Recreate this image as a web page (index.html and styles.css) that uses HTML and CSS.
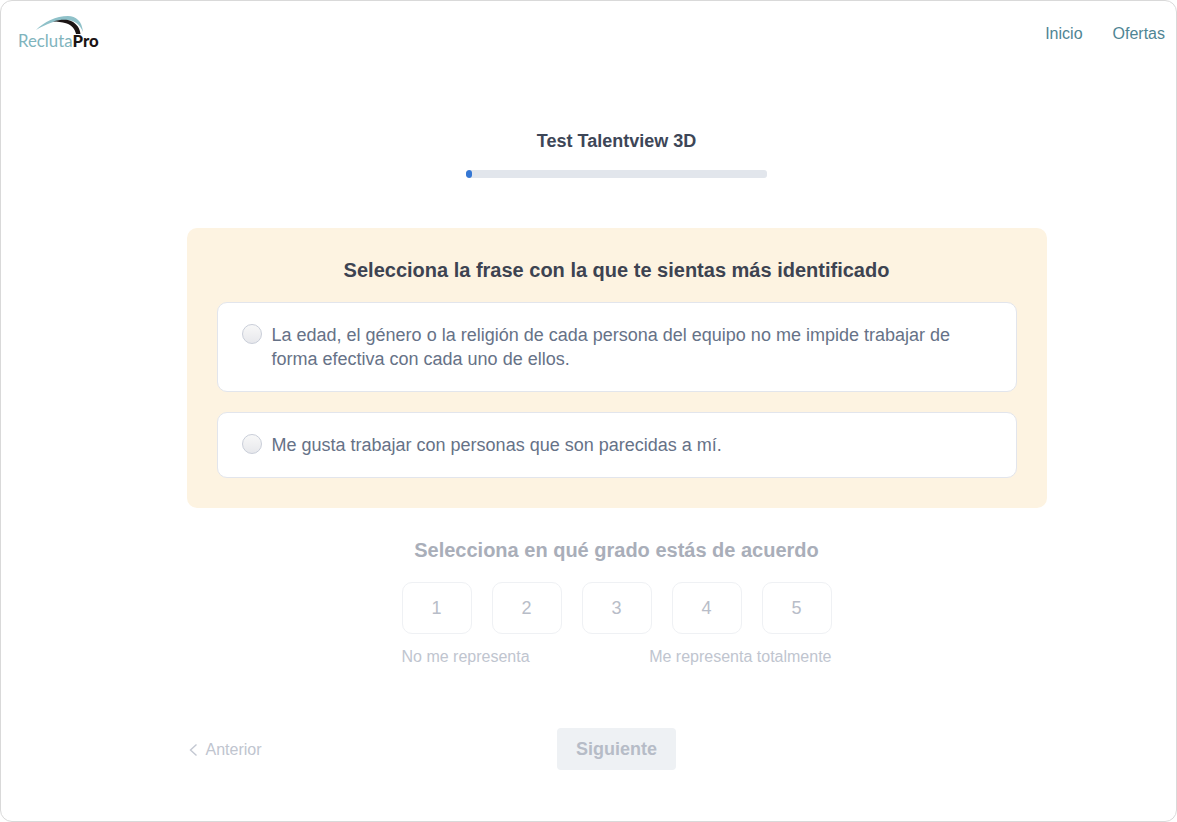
FILE: index.html
```html
<!DOCTYPE html>
<html lang="es">
<head>
<meta charset="utf-8">
<title>Test Talentview 3D</title>
<link rel="stylesheet" href="styles.css">
</head>
<body>
<div class="frame">
  <header class="topbar">
    <a class="logo" href="#">
      <svg class="logo-arc" width="48" height="22" viewBox="0 0 48 22">
        <path d="M0 15C8 7 20 1 32 1C40 1 46 6 47 17C44 9 38 5 30 5C20 5 10 9 0 15Z" fill="#8fc1c9"/>
        <path d="M17 6.500C24 4.500 31 4.200 35 6C41 8.500 44 14 44.500 19L40 19C39 14 36 10 30 8.200C26 7 21 6.500 17 6.500Z" fill="#1b1414"/>
      </svg>
      <span class="logo-text"><span class="logo-light">Recluta</span><span class="logo-bold">Pro</span></span>
    </a>
    <nav class="nav">
      <a href="#">Inicio</a>
      <a href="#">Ofertas</a>
    </nav>
  </header>
  <main class="main">
    <h1 class="title">Test Talentview 3D</h1>
    <div class="progress"><div class="progress-fill"></div></div>
    <section class="card">
      <h2 class="card-title">Selecciona la frase con la que te sientas más identificado</h2>
      <label class="option">
        <span class="radio"></span>
        <span class="option-text">La edad, el género o la religión de cada persona del equipo no me impide trabajar de forma efectiva con cada uno de ellos.</span>
      </label>
      <label class="option">
        <span class="radio"></span>
        <span class="option-text">Me gusta trabajar con personas que son parecidas a mí.</span>
      </label>
    </section>
    <section class="scale">
      <h3 class="scale-title">Selecciona en qué grado estás de acuerdo</h3>
      <div class="scale-buttons">
        <button class="scale-btn">1</button>
        <button class="scale-btn">2</button>
        <button class="scale-btn">3</button>
        <button class="scale-btn">4</button>
        <button class="scale-btn">5</button>
      </div>
      <div class="scale-labels">
        <span>No me representa</span>
        <span>Me representa totalmente</span>
      </div>
    </section>
    <footer class="actions">
      <a class="prev" href="#">
        <svg width="9" height="14" viewBox="0 0 9 14"><path d="M7.500 1.500L1.500 7l6 5.500" fill="none" stroke="#c3c8d2" stroke-width="1.400"/></svg>
        Anterior
      </a>
      <button class="next">Siguiente</button>
    </footer>
  </main>
</div>
</body>
</html>
```
FILE: styles.css
```css
* {
  box-sizing: border-box;
}

html,
body {
  margin: 0;
  padding: 0;
  background: #fff;
}

body {
  font-family: "Liberation Sans", Arial, sans-serif;
  width: 1177px;
  height: 822px;
  overflow: hidden;
}

.frame {
  width: 1177px;
  height: 822px;
  border: 1px solid #d9d9d9;
  border-radius: 12px;
  background: #fff;
  display: flex;
  flex-direction: column;
}

.topbar {
  height: 125px;
  display: flex;
  justify-content: space-between;
  align-items: flex-start;
  padding: 0 11px 0 17px;
}

.logo {
  margin-top: 14px;
  display: flex;
  flex-direction: column;
  text-decoration: none;
}

.logo-arc {
  margin-left: 18px;
  display: block;
}

.logo-text {
  font-family: Lato, sans-serif;
  font-size: 16.800px;
  line-height: 18px;
  margin-top: -5px;
  white-space: nowrap;
}

.logo-light {
  color: #7fb4bd;
  font-weight: 400;
}

.logo-bold {
  color: #1b1414;
  font-weight: 900;
}

.nav {
  display: flex;
  gap: 30px;
  padding-top: 24px;
}

.nav a {
  color: #4f8594;
  font-size: 16px;
  line-height: 18px;
  text-decoration: none;
}

.main {
  width: 860px;
  margin-left: 185.500px;
  display: flex;
  flex-direction: column;
  align-items: center;
}

.title {
  margin: 0;
  font-size: 18px;
  line-height: 30px;
  font-weight: 700;
  color: #3d4657;
}

.progress {
  width: 301px;
  height: 8px;
  margin-top: 14px;
  border-radius: 3px;
  background: #e2e6ec;
  overflow: hidden;
}

.progress-fill {
  width: 6px;
  height: 100%;
  border-radius: 3px;
  background: #3577d4;
}

.card {
  width: 860px;
  height: 280px;
  margin-top: 50px;
  padding: 27px 30px 30px;
  border-radius: 10px;
  background: #fdf3e1;
  display: flex;
  flex-direction: column;
  gap: 20px;
}

.card-title {
  margin: 0 0 -3px;
  height: 30px;
  font-size: 20px;
  line-height: 30px;
  font-weight: 700;
  color: #3d4351;
  text-align: center;
}

.option {
  display: flex;
  align-items: flex-start;
  gap: 10px;
  padding: 20px 24px;
  background: #fff;
  border: 1px solid #e2e5ec;
  border-radius: 10px;
}

.radio {
  flex: none;
  width: 20px;
  height: 20px;
  margin-top: 1px;
  border-radius: 50%;
  border: 1px solid #c9ced9;
  background: linear-gradient(#f8f8f8, #e7e8ec);
}

.option-text {
  font-size: 18px;
  line-height: 24px;
  color: #667287;
}

.scale {
  width: 430px;
  margin-top: 27px;
  display: flex;
  flex-direction: column;
}

.scale-title {
  margin: 0;
  font-size: 20px;
  line-height: 30px;
  font-weight: 700;
  color: #a9aeb9;
  text-align: center;
  white-space: nowrap;
}

.scale-buttons {
  display: flex;
  gap: 20px;
  margin-top: 17px;
}

.scale-btn {
  width: 70px;
  height: 52px;
  padding: 0;
  border: 1px solid #eff1f4;
  border-radius: 10px;
  background: #fff;
  color: #b8bdc8;
  font-family: inherit;
  font-size: 18px;
}

.scale-labels {
  display: flex;
  justify-content: space-between;
  margin-top: 13px;
  font-size: 16px;
  line-height: 20px;
  color: #c0c5cf;
}

.actions {
  width: 860px;
  height: 42px;
  margin-top: 61px;
  display: grid;
  grid-template-columns: 1fr auto 1fr;
  align-items: center;
}

.prev {
  display: flex;
  align-items: center;
  gap: 8px;
  padding: 1px 0 0 2px;
  font-size: 16px;
  color: #c0c5cf;
  text-decoration: none;
}

.next {
  grid-column: 2;
  width: 119px;
  height: 42px;
  padding: 0;
  border: 0;
  border-radius: 4px;
  background: #eef1f4;
  color: #b6bcc7;
  font-family: inherit;
  font-size: 18px;
  font-weight: 700;
}
```
